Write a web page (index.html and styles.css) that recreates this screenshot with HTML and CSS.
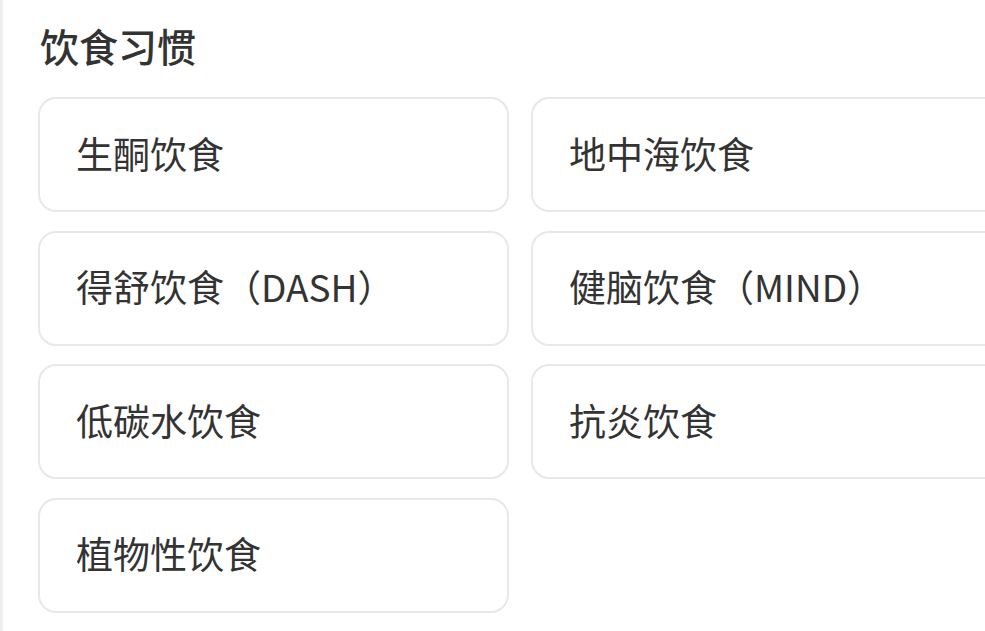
FILE: index.html
```html
<!DOCTYPE html>
<html lang="zh">
<head>
<meta charset="utf-8">
<link rel="stylesheet" href="styles.css">
</head>
<body>
<div class="page">
  <h2 class="title">饮食习惯</h2>
  <div class="grid">
    <div class="card">生酮饮食</div>
    <div class="card">地中海饮食</div>
    <div class="card">得舒饮食（DASH）</div>
    <div class="card">健脑饮食（MIND）</div>
    <div class="card">低碳水饮食</div>
    <div class="card">抗炎饮食</div>
    <div class="card">植物性饮食</div>
  </div>
</div>
</body>
</html>
```
FILE: styles.css
```css
html, body {
  margin: 0;
  padding: 0;
  background: #ffffff;
  overflow: hidden;
}
body {
  font-family: "Noto Sans CJK SC", "Noto Sans", sans-serif;
  color: #333333;
}
.page {
  width: 985px;
  height: 631px;
  box-sizing: border-box;
  border-left: 3px solid #efefef;
  padding: 21px 0 0 35px;
  overflow: hidden;
}
.title {
  margin: 0 0 0 2px;
  font-size: 39px;
  line-height: 48px;
  font-weight: 500;
  color: #333333;
}
.grid {
  margin-top: 28px;
  display: grid;
  grid-template-columns: 471px 471px;
  column-gap: 22px;
  row-gap: 18.5px;
}
.card {
  box-sizing: border-box;
  height: 115px;
  border: 2px solid #e8e8e8;
  border-radius: 18px;
  display: flex;
  align-items: center;
  padding-left: 36px;
  padding-bottom: 4px;
  font-size: 37px;
  color: #333333;
  white-space: nowrap;
}
```
